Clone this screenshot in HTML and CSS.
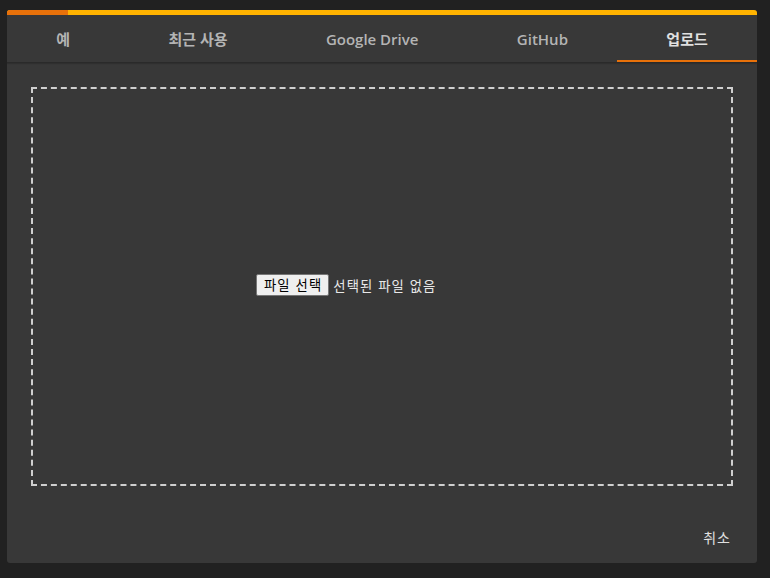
FILE: index.html
```html
<!DOCTYPE html>
<html lang="ko">
<head>
  <meta charset="UTF-8">
  <title>업로드</title>
  <meta name="viewport" content="width=device-width,initial-scale=1.0">
  <link rel="stylesheet" href="styles.css">
</head>
<body>
<div class="dialog">
  <div class="progress"><div class="progress-fill"></div></div>
  <ul class="tabs">
    <li>예</li>
    <li>최근 사용</li>
    <li>Google Drive</li>
    <li>GitHub</li>
    <li class="active">업로드</li>
  </ul>
  <div class="content">
    <div class="dropzone">
      <div class="file-input">
        <span class="file-btn">파일 선택</span>
        <span class="file-name">선택된 파일 없음</span>
      </div>
    </div>
  </div>
  <div class="footer">
    <span class="cancel">취소</span>
  </div>
</div>
</body>
</html>
```

FILE: styles.css
```css
*{
  margin: 0;
  padding: 0;
  box-sizing: border-box;
}
body{
  background-color: #212121;
  font-family: "Open Sans", "Noto Sans CJK KR", sans-serif;
  padding: 10px 0 0 7px;
}
.dialog{
  width: 750px;
  height: 553px;
  background-color: #383838;
  border-radius: 3px;
  overflow: hidden;
  display: flex;
  flex-direction: column;
}
.progress{
  height: 5px;
  background-color: #ffb300;
}
.progress-fill{
  width: 61px;
  height: 100%;
  background-color: #e8710a;
}
.tabs{
  display: flex;
  height: 48px;
  border-bottom: 1px solid #2a2a2a;
  box-shadow: 0 1px 1px rgba(0,0,0,0.15);
}
.tabs>li{
  list-style: none;
  flex: 1 1 auto;
  display: flex;
  align-items: center;
  justify-content: center;
  font-size: 15px;
  font-weight: 600;
  color: #b4b4b4;
  border-bottom: 2px solid transparent;
  padding-top: 2px;
}
.tabs>li.active{
  color: #e0e0e0;
  border-bottom-color: #e8710a;
}
.content{
  padding: 24px 24px 0;
}
.dropzone{
  height: 399px;
  border: 2px dashed #d0d0d0;
  display: flex;
  align-items: center;
  justify-content: center;
}
.file-input{
  width: 252px;
  display: flex;
  align-items: center;
  gap: 4px;
  font-size: 13.33px;
  letter-spacing: 1.1px;
  font-family: "Noto Sans CJK KR", sans-serif;
  margin-top: -3px;
}
.file-btn{
  height: 22px;
  padding: 0 6px 0 7px;
  background-color: #efefef;
  border: 1px solid #767676;
  border-radius: 2px;
  color: #000;
  line-height: 20px;
}
.file-name{
  color: #e8e8e8;
}
.footer{
  flex: 1;
  display: flex;
  justify-content: flex-end;
  align-items: center;
  padding: 24px 26px 0 0;
}
.cancel{
  font-family: "Noto Sans CJK KR", sans-serif;
  font-size: 14px;
  letter-spacing: 1px;
  color: #e0e0e0;
}
```
